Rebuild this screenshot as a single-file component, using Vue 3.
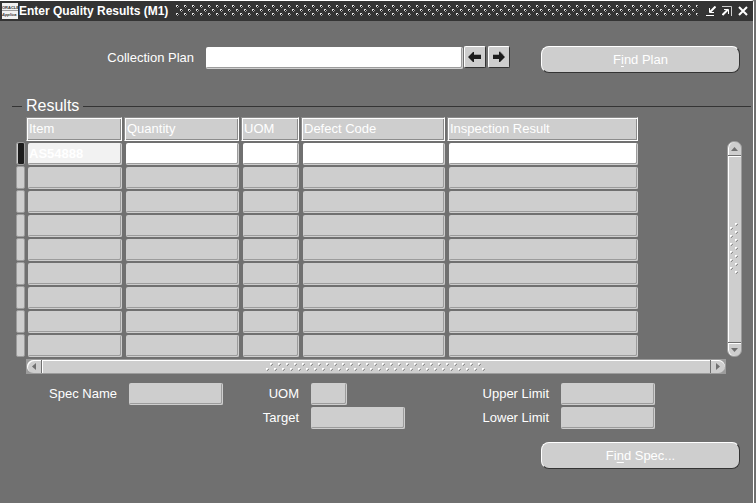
<script setup>
import { ref } from 'vue'

const columns = [
  { key: 'item', label: 'Item' },
  { key: 'quantity', label: 'Quantity' },
  { key: 'uom', label: 'UOM' },
  { key: 'defect', label: 'Defect Code' },
  { key: 'result', label: 'Inspection Result' },
]

const rows = ref(Array.from({ length: 9 }, () => ({ item: '', quantity: '', uom: '', defect: '', result: '' })))
rows.value[0].item = 'AS54888'

const current = ref(0)
const plan = ref('')
</script>

<template>
  <main class="window">
    <header class="titlebar">
      <svg class="logo" width="16" height="16" viewBox="0 0 16 16" aria-hidden="true">
        <rect width="16" height="16" fill="#f2f2f2" />
        <rect y="7" width="16" height="1" fill="#9c9c9c" />
        <text x="0" y="6" font-size="4">ORACLE</text>
        <text x="0" y="13" font-size="4" font-style="italic">Applica</text>
      </svg>
      <h1>Enter Quality Results (M1)</h1>
      <svg class="grip" height="12" aria-hidden="true">
        <defs>
          <pattern id="title-dots" width="8" height="8" patternUnits="userSpaceOnUse">
            <path d="M0 0h2v1h-1v1h-1zM4 4h2v1h-1v1h-1z" fill="#e0e0e0" />
            <path d="M2 1h1v1h-1v1h-1v-1h1zM6 5h1v1h-1v1h-1v-1h1z" fill="#9c9c9c" />
            <path d="M1 1h1v1h-1zM5 5h1v1h-1z" fill="#000" />
          </pattern>
        </defs>
        <rect width="100%" height="12" fill="url(#title-dots)" />
      </svg>
      <div class="controls">
        <button aria-label="Minimize">
          <svg width="10" height="10" viewBox="0 0 10 10" fill="none" stroke="#fff">
            <path d="M0 9.5h8" /><path d="M9.500 0.5L4 6" stroke-width="2" /><path d="M3.500 2v4.500h4.500" />
          </svg>
        </button>
        <button aria-label="Maximize">
          <svg width="10" height="10" viewBox="0 0 10 10" fill="none" stroke="#fff">
            <path d="M0 0.5h9.500v9.500" stroke="#cecece" /><path d="M0.5 9L6 3.500" stroke-width="2" /><path d="M2 3.500h4.500v4.500" />
          </svg>
        </button>
        <button aria-label="Close">
          <svg width="10" height="10" viewBox="0 0 10 10" fill="none" stroke="#fff" stroke-width="2">
            <path d="M1 1l8 8M9 1L1 9" />
          </svg>
        </button>
      </div>
    </header>

    <div class="body">
      <div class="plan">
        <label for="plan">Collection Plan</label>
        <input id="plan" v-model="plan" class="field editable">
        <button class="nav" aria-label="Previous">
          <svg width="14" height="12" viewBox="0 0 14 12">
            <path d="M6 0v3h7v1H5z" fill="#9c9c9c" />
            <path d="M0 6l5-5h1v3h7v4H6v3H5z" fill="#1c1c1c" />
          </svg>
        </button>
        <button class="nav" aria-label="Next">
          <svg width="14" height="12" viewBox="0 0 14 12">
            <path d="M7 0h1l4 4H1V3h6z" fill="#9c9c9c" />
            <path d="M13 6L8 1H7v3H1v4h6v3h1z" fill="#1c1c1c" />
          </svg>
        </button>
        <button class="action">F<u>i</u>nd Plan</button>
      </div>

      <fieldset class="results">
        <legend>Results</legend>
        <div class="block">
          <div class="records">
            <table>
              <colgroup>
                <col class="c-marker">
                <col v-for="c in columns" :key="c.key" :class="'c-' + c.key">
              </colgroup>
              <thead>
                <tr>
                  <td />
                  <th v-for="c in columns" :key="c.key" scope="col">{{ c.label }}</th>
                </tr>
              </thead>
              <tbody>
                <tr v-for="(row, i) in rows" :key="i" :class="{ current: i === current }">
                  <td>
                    <button class="marker" :aria-label="'Select record ' + (i + 1)" @click="current = i" />
                  </td>
                  <td v-for="c in columns" :key="c.key" class="cell">
                    <input
                      v-model="row[c.key]"
                      class="field"
                      :class="{ key: c.key === 'item' }"
                      :aria-label="c.label + ' ' + (i + 1)"
                      @focus="current = i"
                    >
                  </td>
                </tr>
              </tbody>
            </table>
          </div>

          <div class="vscroll">
            <button aria-label="Scroll up">
              <svg width="7" height="4" viewBox="0 0 7 4"><path d="M0 4L3.500 0L7 4z" fill="#707070" /></svg>
            </button>
            <div class="track">
              <svg width="9" height="52" aria-hidden="true">
                <defs>
                  <pattern id="v-dots" width="9" height="8" patternUnits="userSpaceOnUse">
                    <path d="M5 0h2v1h-1v1h-1zM0 4h2v1h-1v1h-1z" fill="#fff" />
                    <path d="M7 1h1v1h-1v1h-1v-1h1zM2 5h1v1h-1v1h-1v-1h1z" fill="#8c8c8c" />
                  </pattern>
                </defs>
                <rect width="9" height="52" fill="url(#v-dots)" />
              </svg>
            </div>
            <button aria-label="Scroll down">
              <svg width="7" height="4" viewBox="0 0 7 4"><path d="M0 0h7L3.500 4z" fill="#707070" /></svg>
            </button>
          </div>

          <div class="hscroll">
            <button aria-label="Scroll left">
              <svg width="4" height="7" viewBox="0 0 4 7"><path d="M4 0v7L0 3.500z" fill="#707070" /></svg>
            </button>
            <div class="track">
              <svg width="220" height="8" aria-hidden="true">
                <defs>
                  <pattern id="h-dots" width="8" height="8" patternUnits="userSpaceOnUse">
                    <path d="M4 0h2v1h-1v1h-1zM0 5h2v1h-1v1h-1z" fill="#fff" />
                    <path d="M6 1h1v1h-1v1h-1v-1h1zM2 6h1v1h-1v1h-1v-1h1z" fill="#8c8c8c" />
                  </pattern>
                </defs>
                <rect width="220" height="8" fill="url(#h-dots)" />
              </svg>
            </div>
            <button aria-label="Scroll right">
              <svg width="4" height="7" viewBox="0 0 4 7"><path d="M0 0v7L4 3.500z" fill="#707070" /></svg>
            </button>
          </div>
        </div>
      </fieldset>

      <div class="spec">
        <label for="spec-name">Spec Name</label>
        <input id="spec-name" class="field" readonly>
        <label for="spec-uom">UOM</label>
        <input id="spec-uom" class="field short" readonly>
        <label for="upper">Upper Limit</label>
        <input id="upper" class="field" readonly>
        <label for="target" class="second">Target</label>
        <input id="target" class="field" readonly>
        <label for="lower">Lower Limit</label>
        <input id="lower" class="field" readonly>
      </div>

      <div class="footer">
        <button class="action">Fi<u>n</u>d Spec...</button>
      </div>
    </div>
  </main>
</template>

<style>
body { margin: 0; background: #707070; }
</style>

<style scoped>
* { box-sizing: border-box; }

.window {
  min-height: 100vh;
  margin-right: 2px;
  background: #707070;
  border-top: 1px solid #fff;
  border-right: 1px solid #fff;
  border-radius: 0 3px 0 0;
  color: #fff;
  font: 13px/16px "Liberation Sans", Arial, sans-serif;
}
button, input { font: inherit; color: inherit; }
button { display: flex; align-items: center; justify-content: center; padding: 0; }

.titlebar {
  display: flex; align-items: center;
  height: 20px; padding: 0 5px 0 2px;
  background: #343434;
}
.logo { flex: none; fill: #343434; font-weight: bold; }
.titlebar h1 { margin: 0 8px 0 1px; font-size: 12px; white-space: nowrap; }
.grip { flex: 1; min-width: 0; }
.controls { display: flex; gap: 6px; margin-left: 8px; }
.controls button { border: 0; background: none; }

.body { padding: 25px 2px 33px 12px; }

.field {
  display: block;
  width: 100%; height: 22px; min-width: 0;
  padding: 0 2px;
  background: #cecece;
  border: solid #cecece; border-width: 0 1px 1px 0;
  border-radius: 2px;
  box-shadow: inset -1px -1px #9c9c9c;
  outline: none;
}
.field.editable { background: #fff; color: #1c1c1c; }

.plan { display: flex; align-items: flex-start; padding-right: 11px; }
.plan label { flex: none; width: 182px; margin: 4px 12px 0 0; text-align: right; }
.plan .field { flex: 1; margin: 1px 1px 0 0; }
.nav {
  flex: none;
  width: 22px; height: 22px; margin-right: 2px;
  background: #cecece;
  border: 1px solid; border-color: #fff #343434 #343434 #fff;
  border-radius: 2px;
}
.action {
  flex: none;
  width: 199px; height: 27px;
  background: #cecece;
  border: 1px solid; border-color: #fff #343434 #343434 #fff;
  border-radius: 8px;
}
.plan .action { margin-left: 29px; }
.action u { text-underline-offset: 2px; }

.results {
  margin: 24px 0 0; padding: 0 9px 0 2px;
  border: 0; border-top: 1px solid #343434;
  min-width: 0;
}
.results legend { margin-left: 8px; padding: 0 4px; font-size: 16px; line-height: 18px; }

.block { display: grid; grid-template-columns: 1fr 15px; row-gap: 1px; }
.records { padding: 1px 87px 0 0; }

table { width: 100%; table-layout: fixed; border-spacing: 2px 1px; }
.c-marker { width: 8px; }
.c-item { width: 96px; }
.c-quantity { width: 115px; }
.c-uom { width: 58px; }
.c-defect { width: 144px; }
th {
  height: 24px; padding: 0 2px;
  background: #cecece;
  border: 1px solid; border-color: #8c8c8c #fff #fff #8c8c8c;
  box-shadow: inset 1px 1px #fff, inset -1px -1px #8c8c8c;
  font-weight: normal; text-align: left; white-space: nowrap;
}
td { padding: 0; }
.cell { padding: 1px 0 0 2px; }
.cell .field { padding: 0 1px; }
.current .field { background: #fff; color: #1c1c1c; }
.current .key { background: #f2f2f2; color: #fff; font-weight: bold; }
.marker {
  width: 9px; height: 23px;
  background: #cecece;
  border: 1px solid #9c9c9c;
  border-radius: 2px;
  box-shadow: inset 1px 0 #cecece;
}
.current .marker { background: #1c1c1c; }

.vscroll {
  display: flex; flex-direction: column;
  margin: 26px 0 1px;
  background: #cecece;
  border: 1px solid #9c9c9c;
  border-radius: 7px;
  box-shadow: inset 1px 0 #fff;
}
.vscroll button, .hscroll button { flex: none; border: 0; background: none; }
.vscroll button { height: 13px; }
.track { flex: 1; display: flex; align-items: center; justify-content: center; }
.vscroll .track {
  border-top: 1px solid #707070; border-bottom: 1px solid #707070;
  box-shadow: inset 0 1px #fff, 0 1px #fff;
}

.hscroll {
  display: flex;
  height: 15px; margin: 0 1px 0 12px;
  background: #9c9c9c;
  border: 1px solid #9c9c9c;
}
.hscroll button { width: 14px; background: #cecece; box-shadow: inset 0 1px #fff; }
.hscroll button:first-child { border-radius: 7px 0 0 7px; box-shadow: inset 1px 1px #fff; }
.hscroll button:last-child { border-radius: 0 7px 7px 0; box-shadow: inset 0 1px #fff; }
.hscroll .track {
  background: #cecece;
  border-left: 1px solid #707070; border-right: 1px solid #707070;
  box-shadow: inset 1px 1px #fff;
}

.spec {
  display: grid;
  grid-template-columns: 105fr 94px 64fr 94px 132fr 94px;
  gap: 2px 12px;
  align-items: center;
  margin-top: 9px; padding-right: 96px;
}
.spec label { text-align: right; white-space: nowrap; }
.spec .short { width: 36px; }
.spec .second { grid-column: 3; }

.footer { display: flex; justify-content: flex-end; margin-top: 13px; padding-right: 11px; }
</style>
